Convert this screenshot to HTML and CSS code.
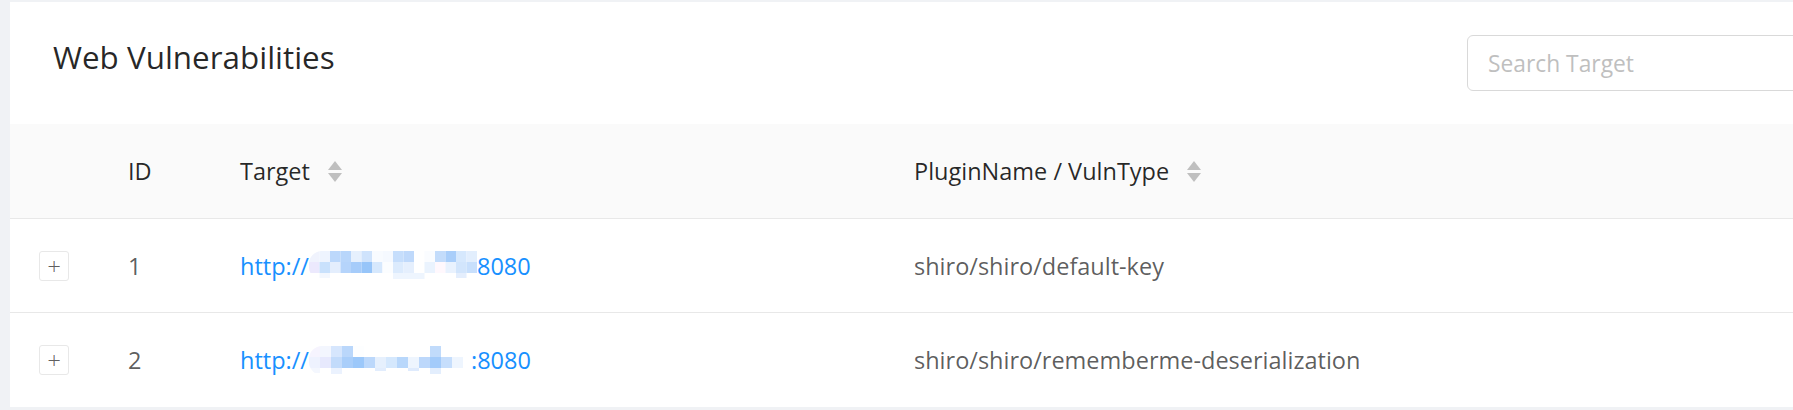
FILE: index.html
```html
<!DOCTYPE html>
<html>
<head>
<meta charset="utf-8">
<link rel="stylesheet" href="styles.css">
</head>
<body>
<div class="card">
  <div class="card-head">
    <h1 class="title">Web Vulnerabilities</h1>
    <div class="search"><span class="placeholder">Search Target</span></div>
  </div>
  <div class="table">
    <div class="row head">
      <div class="cell"></div>
      <div class="cell">ID</div>
      <div class="cell">Target<span class="sorter"><i class="up"></i><i class="down"></i></span></div>
      <div class="cell">PluginName / VulnType<span class="sorter"><i class="up"></i><i class="down"></i></span></div>
    </div>
    <div class="row">
      <div class="cell expand-cell"><span class="expand">+</span></div>
      <div class="cell">1</div>
      <div class="cell"><a class="link">http://<svg class="blur" width="168" height="29" viewBox="0 0 176 29" preserveAspectRatio="none">
        <rect x="0" y="0" width="11" height="11" fill="#f0f3fd"/><rect x="11" y="0" width="11" height="11" fill="#eef4fe"/><rect x="22" y="0" width="11" height="11" fill="#bcd8fb"/><rect x="33" y="0" width="11" height="11" fill="#b8d6fb"/><rect x="44" y="0" width="11" height="11" fill="#e6f0fd"/><rect x="55" y="0" width="11" height="11" fill="#cfe3fc"/><rect x="66" y="0" width="11" height="11" fill="#f8fbff"/><rect x="77" y="0" width="11" height="11" fill="#f5f9ff"/><rect x="88" y="0" width="11" height="11" fill="#c6defc"/><rect x="99" y="0" width="11" height="11" fill="#bfd9fb"/><rect x="110" y="0" width="11" height="11" fill="#ffffff"/><rect x="121" y="0" width="11" height="11" fill="#fafcff"/><rect x="132" y="0" width="11" height="11" fill="#c3dcfb"/><rect x="143" y="0" width="11" height="11" fill="#a9cefa"/><rect x="154" y="0" width="11" height="11" fill="#d6e8fd"/><rect x="165" y="0" width="11" height="11" fill="#e2eefd"/>
        <rect x="0" y="11" width="11" height="11" fill="#ece9fd"/><rect x="11" y="11" width="11" height="11" fill="#c9e1fc"/><rect x="22" y="11" width="11" height="11" fill="#e4eefd"/><rect x="33" y="11" width="11" height="11" fill="#b5d4fb"/><rect x="44" y="11" width="11" height="11" fill="#a6ccfa"/><rect x="55" y="11" width="11" height="11" fill="#97c5f9"/><rect x="66" y="11" width="11" height="11" fill="#d6e8fd"/><rect x="77" y="11" width="11" height="11" fill="#fbfdff"/><rect x="88" y="11" width="11" height="11" fill="#dcebfd"/><rect x="99" y="11" width="11" height="11" fill="#e5effd"/><rect x="110" y="11" width="11" height="11" fill="#ffffff"/><rect x="121" y="11" width="11" height="11" fill="#eaf3fe"/><rect x="132" y="11" width="11" height="11" fill="#fff8fd"/><rect x="143" y="11" width="11" height="11" fill="#e9f2fe"/><rect x="154" y="11" width="11" height="11" fill="#d2e5fc"/><rect x="165" y="11" width="11" height="11" fill="#c8dffc"/>
        <rect x="11" y="22" width="11" height="5" fill="#f3f7fe"/><rect x="88" y="22" width="33" height="6" fill="#eef5fe"/><rect x="154" y="22" width="11" height="5" fill="#e4eefd"/>
      </svg>8080</a></div>
      <div class="cell">shiro/shiro/default-key</div>
    </div>
    <div class="row">
      <div class="cell expand-cell"><span class="expand">+</span></div>
      <div class="cell">2</div>
      <div class="cell"><a class="link">http://<svg class="blur" width="162" height="29" viewBox="0 0 162 29">
        <rect x="0" y="0" width="11" height="11" fill="#f6f4fe"/><rect x="11" y="0" width="11" height="11" fill="#f3f6fe"/><rect x="22" y="0" width="11" height="11" fill="#d6e6fd"/><rect x="33" y="0" width="11" height="11" fill="#bad7fb"/><rect x="44" y="0" width="11" height="11" fill="#fdfeff"/><rect x="55" y="0" width="11" height="11" fill="#ffffff"/><rect x="66" y="0" width="11" height="11" fill="#ffffff"/><rect x="77" y="0" width="11" height="11" fill="#ffffff"/><rect x="88" y="0" width="11" height="11" fill="#ffffff"/><rect x="99" y="0" width="11" height="11" fill="#ffffff"/><rect x="110" y="0" width="11" height="11" fill="#ffffff"/><rect x="121" y="0" width="11" height="11" fill="#c1dbfb"/><rect x="132" y="0" width="11" height="11" fill="#ffffff"/><rect x="143" y="0" width="11" height="11" fill="#ffffff"/>
        <rect x="0" y="11" width="11" height="11" fill="#eef2fe"/><rect x="11" y="11" width="11" height="11" fill="#e7e9fd"/><rect x="22" y="11" width="11" height="11" fill="#c2dbfb"/><rect x="33" y="11" width="11" height="11" fill="#a9cefa"/><rect x="44" y="11" width="11" height="11" fill="#9cc8fa"/><rect x="55" y="11" width="11" height="11" fill="#bcd8fb"/><rect x="66" y="11" width="11" height="11" fill="#e6f0fd"/><rect x="77" y="11" width="11" height="11" fill="#d5e8fd"/><rect x="88" y="11" width="11" height="11" fill="#b8d7fb"/><rect x="99" y="11" width="11" height="11" fill="#eef5fe"/><rect x="110" y="11" width="11" height="11" fill="#bdd8fb"/><rect x="121" y="11" width="11" height="11" fill="#a3cbfa"/><rect x="132" y="11" width="11" height="11" fill="#c6defc"/><rect x="143" y="11" width="11" height="11" fill="#eef5fe"/>
        <rect x="0" y="22" width="11" height="5" fill="#f4f7fe"/><rect x="22" y="22" width="11" height="6" fill="#ebf2fe"/><rect x="66" y="22" width="11" height="3" fill="#e2edfd"/><rect x="99" y="22" width="11" height="3" fill="#dfebfd"/><rect x="121" y="22" width="11" height="6" fill="#e3eefd"/>
      </svg>:8080</a></div>
      <div class="cell">shiro/shiro/rememberme-deserialization</div>
    </div>
  </div>
</div>
</body>
</html>
```

FILE: styles.css
```css
html, body {
  margin: 0;
  padding: 0;
  background: #f0f2f5;
  overflow: hidden;
}
body {
  font-family: "Open Sans", "Noto Sans", sans-serif;
  color: rgba(0, 0, 0, 0.65);
}
.card {
  margin: 2px 0 0 10px;
  width: 1857px;
  background: #fff;
  height: 405px;
}
.card-head {
  display: flex;
  justify-content: space-between;
  align-items: flex-start;
  height: 122px;
}
.title {
  margin: 0;
  padding: 35px 0 0 43px;
  font-size: 31.4px;
  font-weight: 400;
  line-height: 40px;
  color: rgba(0, 0, 0, 0.85);
}
.search {
  margin-top: 33px;
  width: 400px;
  height: 56px;
  border: 1px solid #d9d9d9;
  border-radius: 6px;
  box-sizing: border-box;
  display: flex;
  align-items: center;
  padding-left: 20px;
}
.placeholder {
  color: #bfbfbf;
  font-size: 22.8px;
  line-height: 1;
  padding-top: 2px;
}
.table {
  font-size: 23.5px;
}
.row {
  display: grid;
  grid-template-columns: 94px 112px 674px 1fr;
  height: 93px;
  border-bottom: 1px solid #e8e8e8;
}
.row:last-child {
  border-bottom: none;
  height: 94px;
}
.row.head {
  background: #fafafa;
  height: 94px;
  color: rgba(0, 0, 0, 0.85);
}
.cell {
  display: flex;
  align-items: center;
  padding-left: 24px;
  white-space: nowrap;
}
.expand-cell {
  padding-left: 29px;
}
.sorter {
  display: inline-flex;
  flex-direction: column;
  margin-left: 18px;
  gap: 3px;
}
.sorter i {
  display: block;
  width: 0;
  height: 0;
  border-left: 7px solid transparent;
  border-right: 7px solid transparent;
}
.sorter .up {
  border-bottom: 9px solid #bfbfbf;
}
.sorter .down {
  border-top: 9px solid #bfbfbf;
}
.expand {
  display: flex;
  align-items: center;
  justify-content: center;
  width: 30px;
  height: 30px;
  box-sizing: border-box;
  border: 1px solid #e8e8e8;
  border-radius: 3px;
  color: rgba(0, 0, 0, 0.65);
  font-size: 24px;
  font-weight: 300;
  line-height: 1;
}
.link {
  color: #1890ff;
  display: inline-flex;
  align-items: center;
}
.blur {
  display: block;
  border-radius: 13px 0 0 13px;
}
```
